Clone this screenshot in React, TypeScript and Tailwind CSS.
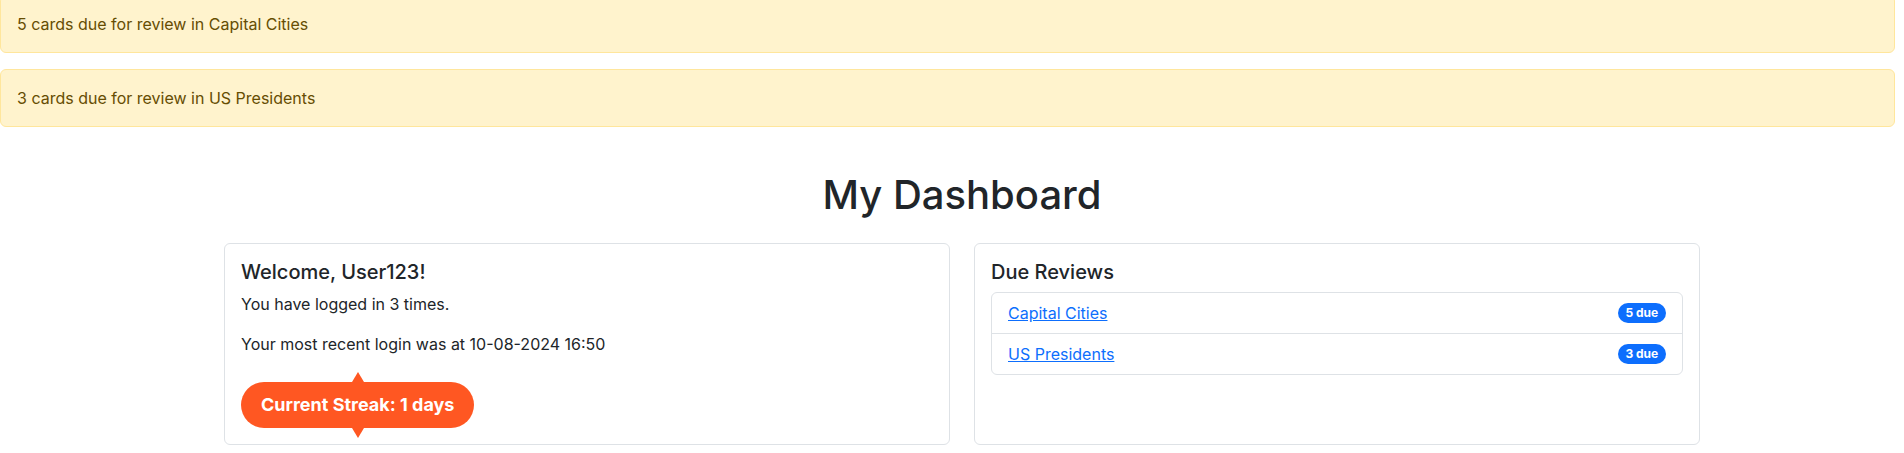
import React from 'react';

const alerts = [
  { count: 5, deck: 'Capital Cities' },
  { count: 3, deck: 'US Presidents' },
];

const dueDecks = [
  { name: 'Capital Cities', due: 5 },
  { name: 'US Presidents', due: 3 },
];

const StreakBadge = ({ days }: { days: number }) => (
  <div className="relative inline-flex mt-[10px] h-[46px] items-center rounded-full bg-[#ff5722] px-5 text-[18px] font-bold text-white">
    <span className="absolute left-1/2 -top-[10px] -translate-x-1/2 h-0 w-0 border-x-[6px] border-x-transparent border-b-[10px] border-b-[#ff5722]" />
    Current Streak: {days} days
    <span className="absolute left-1/2 -bottom-[10px] -translate-x-1/2 h-0 w-0 border-x-[6px] border-x-transparent border-t-[10px] border-t-[#ff5722]" />
  </div>
);

export default function App() {
  return (
    <div className="min-h-[453px] bg-white font-['Inter','Liberation_Sans',sans-serif] text-base leading-6 text-[#212529]">
      <div className="-mt-[5px] pr-[9px]">
        {alerts.map((a) => (
          <div
            key={a.deck}
            className="mb-4 rounded-md border border-[#ffe69c] bg-[#fff3cd] p-4 text-[#664d03]"
          >
            {a.count} cards due for review in {a.deck}
          </div>
        ))}
      </div>

      <div className="ml-[224px] w-[1476px]">
        <h1 className="mt-[44px] mb-6 text-center text-[40px] font-medium leading-[1.2]">My Dashboard</h1>

        <div className="grid grid-cols-2 gap-6">
          <div className="rounded-md border border-[#dee2e6] p-4">
            <h5 className="mb-2 text-xl font-medium leading-[1.2]">Welcome, User123!</h5>
            <p className="mb-4">You have logged in 3 times.</p>
            <p className="mb-4">Your most recent login was at 10-08-2024 16:50</p>
            <StreakBadge days={1} />
          </div>

          <div className="rounded-md border border-[#dee2e6] p-4">
            <h5 className="mb-2 text-xl font-medium leading-[1.2]">Due Reviews</h5>
            <ul className="rounded-md border border-[#dee2e6]">
              {dueDecks.map((d, i) => (
                <li
                  key={d.name}
                  className={`flex items-center justify-between px-4 py-2 ${i > 0 ? 'border-t border-[#dee2e6]' : ''}`}
                >
                  <a href="#" className="text-[#0d6efd] underline">
                    {d.name}
                  </a>
                  <span className="rounded-full bg-[#0d6efd] px-[7.8px] py-[4.2px] text-xs font-bold leading-none text-white">
                    {d.due} due
                  </span>
                </li>
              ))}
            </ul>
          </div>
        </div>
      </div>
    </div>
  );
}
